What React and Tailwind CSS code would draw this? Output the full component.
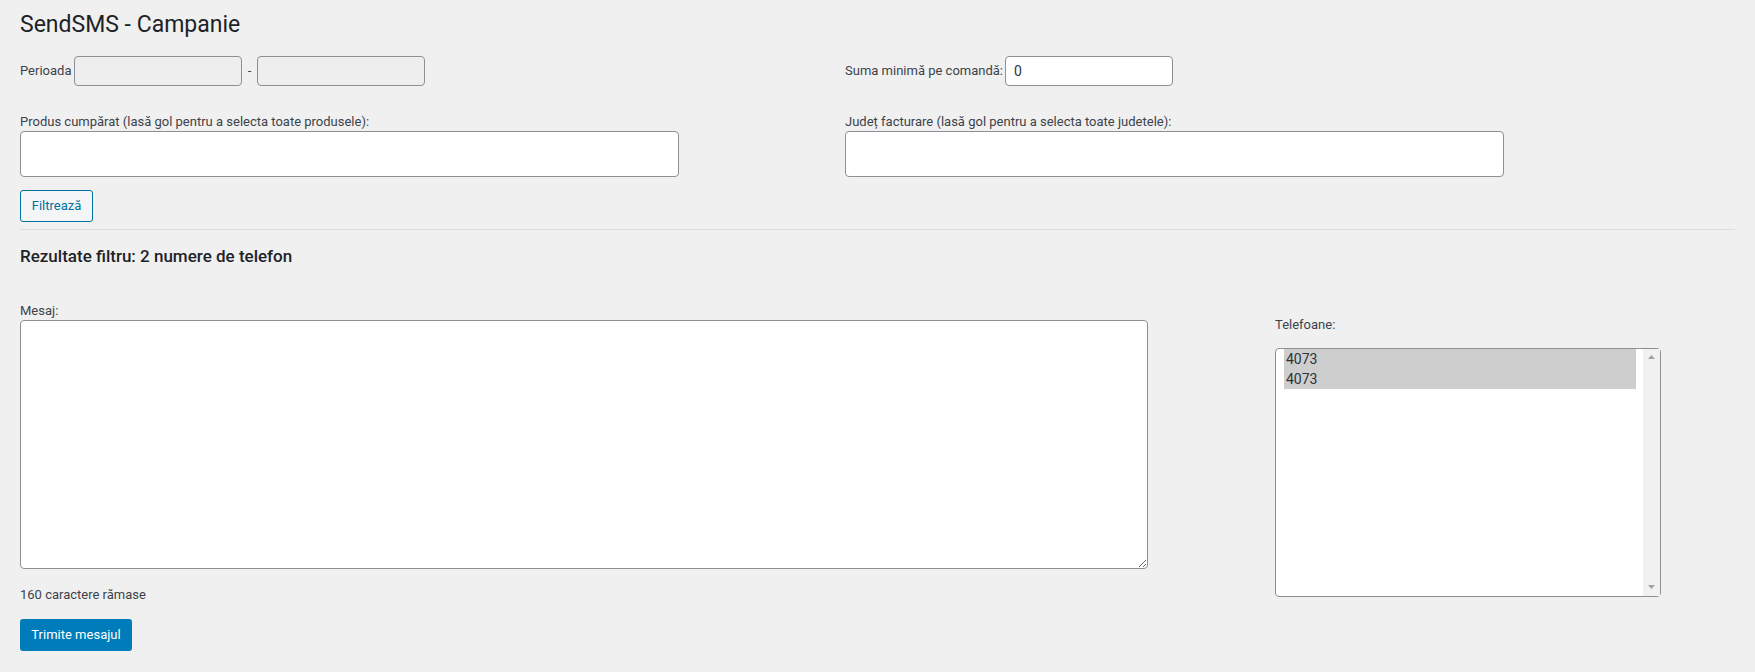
import React, { useState } from "react";

const phones = ["4073", "4073"];

// small triangle used by the listbox scrollbar
const Arrow = ({ down }) => (
  <svg width="7" height="4" viewBox="0 0 7 4" className="block">
    {down ? <path d="M0 0 H7 L3.5 4 Z" fill="#a3a3a3" /> : <path d="M0 4 H7 L3.5 0 Z" fill="#a3a3a3" />}
  </svg>
);

const PhoneList = ({ items }) => (
  <div className="flex h-[249px] w-[386px] rounded-[4px] border border-[#8c8f94] bg-white">
    <div className="flex-1 pl-[8px] pr-[7px]">
      {items.map((p, i) => (
        <div key={i} className="h-[20px] bg-[#cecece] pl-[2px] text-[14px] leading-[20px] text-[#2c3338]">
          {p}
        </div>
      ))}
    </div>
    <div className="flex w-[17px] flex-col items-center justify-between bg-[#f1f1f1] pt-[6px] pb-[7px]">
      <Arrow />
      <Arrow down />
    </div>
  </div>
);

const App = () => {
  const [message, setMessage] = useState("");
  const [minSum, setMinSum] = useState("0");

  return (
    <div className="min-h-[672px] bg-[#f0f0f1] font-['Roboto','Liberation_Sans',sans-serif] text-[13px] leading-[18px] text-[#3c434a]">
      <div className="px-[20px] pt-[10px]">
        <h1 className="text-[23px] font-normal leading-[30px] text-[#1d2327]">SendSMS - Campanie</h1>

        {/* filters */}
        <div className="mt-[16px] grid grid-cols-[825px_1fr]">
          <div className="flex h-[30px] items-center">
            <span className="w-[54px]">Perioada</span>
            <input readOnly className="h-[30px] w-[168px] rounded-[4px] border border-[#8c8f94] bg-[#eeeeee] px-[8px]" />
            <span className="w-[15px] text-center">-</span>
            <input readOnly className="h-[30px] w-[168px] rounded-[4px] border border-[#8c8f94] bg-[#eeeeee] px-[8px]" />
          </div>
          <div className="flex h-[30px] items-center">
            <span className="w-[160px]">Suma minimă pe comandă:</span>
            <input
              value={minSum}
              onChange={(e) => setMinSum(e.target.value)}
              className="h-[30px] w-[168px] rounded-[4px] border border-[#8c8f94] bg-white px-[8px] text-[14px] text-[#2c3338] outline-none"
            />
          </div>
        </div>

        <div className="mt-[27px] grid grid-cols-[825px_1fr]">
          <div>
            <div>Produs cumpărat (lasă gol pentru a selecta toate produsele):</div>
            <div className="h-[46px] w-[659px] rounded-[4px] border border-[#8c8f94] bg-white"></div>
          </div>
          <div>
            <div>Județ facturare (lasă gol pentru a selecta toate judetele):</div>
            <div className="h-[46px] w-[659px] rounded-[4px] border border-[#8c8f94] bg-white"></div>
          </div>
        </div>

        <button className="mt-[13px] h-[32px] w-[73px] rounded-[3px] border border-[#0071a1] bg-[#f3f5f6] text-[13px] text-[#0071a1]">
          Filtrează
        </button>

        <hr className="mt-[7px] border-0 border-t border-[#dcdcde]" />

        <h2 className="mt-[14px] text-[17px] font-medium leading-[24px] text-[#1d2327]">
          Rezultate filtru: 2 numere de telefon
        </h2>

        {/* message + phone list */}
        <div className="mt-[34px] flex">
          <div className="w-[1128px]">
            <div>Mesaj:</div>
            <textarea
              value={message}
              onChange={(e) => setMessage(e.target.value)}
              className="block h-[249px] w-full rounded-[4px] border border-[#8c8f94] bg-white p-[6px] outline-none"
            />
            <div className="mt-[17px]">{160 - message.length} caractere rămase</div>
            <button className="mt-[15px] h-[32px] w-[112px] rounded-[3px] bg-[#007cba] text-[13px] text-white">
              Trimite mesajul
            </button>
          </div>
          <div className="ml-[127px] pt-[14px]">
            <div>Telefoane:</div>
            <div className="mt-[14px]">
              <PhoneList items={phones} />
            </div>
          </div>
        </div>
      </div>
    </div>
  );
};

export default App;
